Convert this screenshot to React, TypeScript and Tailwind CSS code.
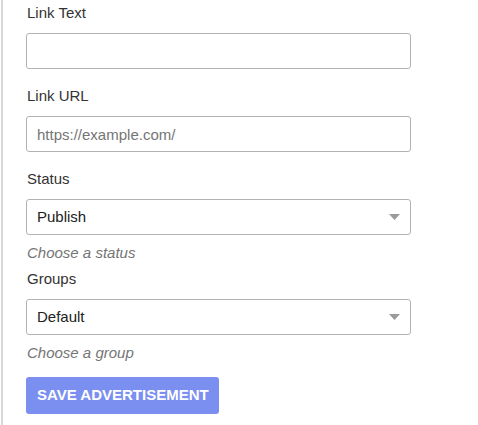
import React from 'react';

const font = { fontFamily: '"Liberation Sans", Arial, sans-serif' };

const Label: React.FC<{ children: React.ReactNode }> = ({ children }) => (
    <label className="block text-[15px] leading-[24px] text-[#333333] pt-[1px] pl-[1px] mb-[8px]">{children}</label>
);

const Help: React.FC<{ children: React.ReactNode }> = ({ children }) => (
    <p className="text-[15px] leading-[24px] italic text-[#757575] mt-[6px] pl-[1px]">{children}</p>
);

const SelectBox: React.FC<{ value: string; options: string[] }> = ({ value, options }) => (
    <div className="relative w-[385px]">
        <select
            defaultValue={value}
            className="appearance-none w-full h-[36px] border border-[#b3b3b3] rounded-[3px] bg-white pl-[10px] pr-8 text-[15px] text-[#212121] outline-none"
        >
            {options.map(o => (
                <option key={o}>{o}</option>
            ))}
        </select>
        <svg className="absolute right-[11px] top-[15px] pointer-events-none" width="11" height="6" viewBox="0 0 11 6">
            <path d="M0 0 L11 0 L5.5 6 Z" fill="#9a9a9a" />
        </svg>
    </div>
);

export default function App() {
    return (
        <div className="min-h-[425px] bg-white" style={font}>
            <div className="ml-[1px] border-l-2 border-[#d9d9d9] pl-[23px] min-h-[425px]">
                {/* Link text */}
                <div>
                    <Label>Link Text</Label>
                    <input
                        type="text"
                        className="block w-[385px] h-[36px] border border-[#b3b3b3] rounded-[3px] px-[10px] text-[15px] text-[#212121] outline-none"
                    />
                </div>

                {/* Link URL */}
                <div className="mt-[14px]">
                    <Label>Link URL</Label>
                    <input
                        type="text"
                        placeholder="https://example.com/"
                        className="block w-[385px] h-[36px] border border-[#b3b3b3] rounded-[3px] px-[10px] text-[15px] text-[#212121] placeholder-[#757575] outline-none"
                    />
                </div>

                {/* Status */}
                <div className="mt-[14px]">
                    <Label>Status</Label>
                    <SelectBox value="Publish" options={['Publish', 'Draft', 'Pending']} />
                    <Help>Choose a status</Help>
                </div>

                {/* Groups */}
                <div className="mt-[1px]">
                    <Label>Groups</Label>
                    <SelectBox value="Default" options={['Default']} />
                    <Help>Choose a group</Help>
                </div>

                <button
                    type="button"
                    className="mt-[12px] w-[193px] h-[37px] rounded-[3px] bg-[#7b8ff0] text-white font-bold text-[15px] uppercase text-left pl-[11px]"
                >
                    Save Advertisement
                </button>
            </div>
        </div>
    );
}
